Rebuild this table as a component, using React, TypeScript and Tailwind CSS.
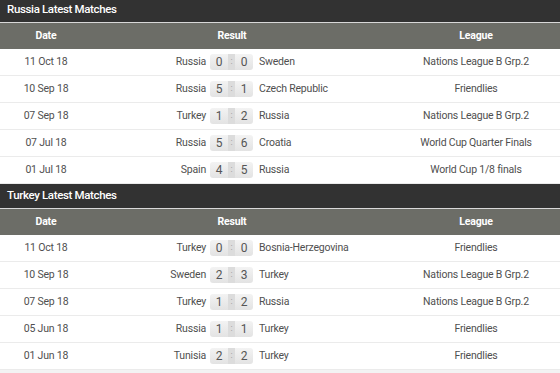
import * as React from 'react';

interface Match {
    date: string;
    home: string;
    hs: number;
    as: number;
    away: string;
    league: string;
}

const sections: { title: string; matches: Match[] }[] = [
    {
        title: 'Russia Latest Matches',
        matches: [
            { date: '11 Oct 18', home: 'Russia', hs: 0, as: 0, away: 'Sweden', league: 'Nations League B Grp.2' },
            { date: '10 Sep 18', home: 'Russia', hs: 5, as: 1, away: 'Czech Republic', league: 'Friendlies' },
            { date: '07 Sep 18', home: 'Turkey', hs: 1, as: 2, away: 'Russia', league: 'Nations League B Grp.2' },
            { date: '07 Jul 18', home: 'Russia', hs: 5, as: 6, away: 'Croatia', league: 'World Cup Quarter Finals' },
            { date: '01 Jul 18', home: 'Spain', hs: 4, as: 5, away: 'Russia', league: 'World Cup 1/8 finals' },
        ],
    },
    {
        title: 'Turkey Latest Matches',
        matches: [
            { date: '11 Oct 18', home: 'Turkey', hs: 0, as: 0, away: 'Bosnia-Herzegovina', league: 'Friendlies' },
            { date: '10 Sep 18', home: 'Sweden', hs: 2, as: 3, away: 'Turkey', league: 'Nations League B Grp.2' },
            { date: '07 Sep 18', home: 'Turkey', hs: 1, as: 2, away: 'Russia', league: 'Nations League B Grp.2' },
            { date: '05 Jun 18', home: 'Russia', hs: 1, as: 1, away: 'Turkey', league: 'Friendlies' },
            { date: '01 Jun 18', home: 'Tunisia', hs: 2, as: 2, away: 'Turkey', league: 'Friendlies' },
        ],
    },
];

const ScoreBox = ({ hs, as }: { hs: number; as: number }) => (
    <div className="flex h-[16px] w-[43px] items-center overflow-hidden rounded-[3px] bg-gradient-to-b from-[#f3f3f3] to-[#e3e3e3] text-[12px] text-[#555]">
        <span className="flex-1 text-center">{hs}</span>
        <span className="flex h-full w-[7px] items-center justify-center bg-[#dcdcdc] text-[9px] text-[#999]">:</span>
        <span className="flex-1 text-center">{as}</span>
    </div>
);

const MatchTable = ({ title, matches }: { title: string; matches: Match[] }) => (
    <div>
        <div className="flex h-[25px] items-center border-b border-[#d8d8d8] bg-[#323232] px-[7px] text-[11.5px] font-medium tracking-[-0.35px] text-white">{title}</div>
        <div className="grid h-[26px] grid-cols-[92px_300px_168px] items-center bg-[#6c6d67] text-[10.5px] font-bold tracking-[-0.2px] text-white">
            <div className="text-center">Date</div>
            <div className="pr-[20px] text-center">Result</div>
            <div className="text-center">League</div>
        </div>
        {matches.map((m, i) => (
            <div key={i} className="grid h-[27px] grid-cols-[92px_300px_168px] items-center border-b border-[#ebebeb] bg-white text-[10.5px] tracking-[-0.2px] text-[#4f4f4f]">
                <div className="text-center">{m.date}</div>
                <div className="flex items-center">
                    <div className="w-[118px] pr-[4px] text-right">{m.home}</div>
                    <ScoreBox hs={m.hs} as={m.as} />
                    <div className="flex-1 pl-[6px] text-left">{m.away}</div>
                </div>
                <div className="text-center">{m.league}</div>
            </div>
        ))}
    </div>
);

export default function App() {
    return (
        <div className="h-[373px] w-[560px] overflow-hidden bg-[#f3f3f3]" style={{ fontFamily: 'Roboto, "Noto Sans", sans-serif' }}>
            <div className="-mt-[2px]">
                {sections.map((s) => (
                    <MatchTable key={s.title} title={s.title} matches={s.matches} />
                ))}
            </div>
        </div>
    );
}
